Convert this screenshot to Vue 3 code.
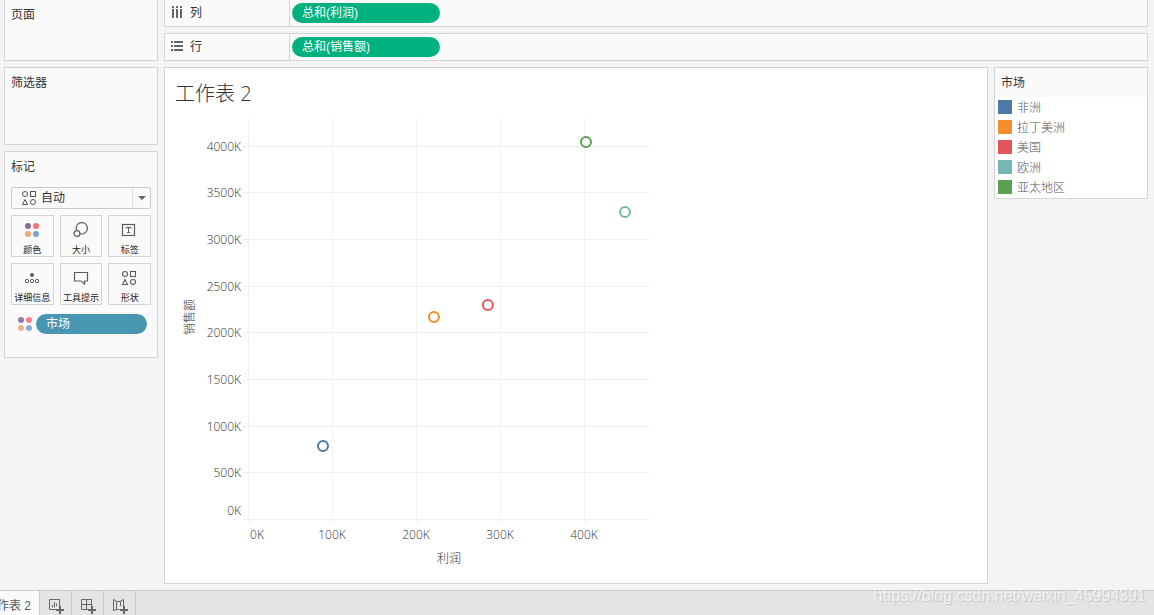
<script setup>
import { ref } from 'vue'

const markType = ref('auto')

const shelves = [
  { key: 'columns', label: '列', pill: '总和(利润)' },
  { key: 'rows', label: '行', pill: '总和(销售额)' },
]

const markButtons = [
  { key: 'color', label: '颜色' },
  { key: 'size', label: '大小' },
  { key: 'label', label: '标签' },
  { key: 'detail', label: '详细信息' },
  { key: 'tooltip', label: '工具提示' },
  { key: 'shape', label: '形状' },
]

const markets = [
  { name: '非洲', color: '#4e79a7', profit: 88.7, sales: 787 },
  { name: '拉丁美洲', color: '#f28e2b', profit: 220.8, sales: 2169 },
  { name: '美国', color: '#e15759', profit: 285, sales: 2298 },
  { name: '欧洲', color: '#76b7b2', profit: 448.2, sales: 3294 },
  { name: '亚太地区', color: '#59a14f', profit: 401.8, sales: 4044 },
]

const px = (v) => 83.5 + v * 0.84
const py = (v) => 407.5 - v * 0.09335
const crisp = (v) => Math.floor(v) + 0.5

const xTicks = [0, 100, 200, 300, 400].map((v) => ({
  text: `${v}K`,
  at: crisp(px(v)),
  textAt: v === 0 ? 92 : Math.floor(px(v)),
}))
const yTicks = [0, 500, 1000, 1500, 2000, 2500, 3000, 3500, 4000].map((v) => ({
  text: `${v}K`,
  at: crisp(py(v)),
  textAt: v === 0 ? 403 : Math.floor(py(v)) + 5,
}))
</script>

<template>
  <div class="app">
    <div class="workspace">
      <aside class="side">
        <section class="card pages"><h2>页面</h2></section>
        <section class="card filters"><h2>筛选器</h2></section>
        <section class="card marks">
          <h2>标记</h2>
          <div class="select-wrap">
            <svg class="select-icon" width="16" height="16" viewBox="0 0 16 16" fill="none" stroke="#555">
              <circle cx="4" cy="4" r="2.5" /><rect x="9.5" y="1.5" width="5" height="5" />
              <path d="M4 9.500 6.500 14.500H1.500z" /><circle cx="12" cy="12" r="2.5" />
            </svg>
            <select v-model="markType" aria-label="标记类型">
              <option value="auto">自动</option>
            </select>
            <span class="arrow"></span>
          </div>
          <div class="mark-grid">
            <button v-for="b in markButtons" :key="b.key" type="button" class="mark-btn">
              <svg width="18" height="18" viewBox="0 0 18 18" fill="none" stroke="#5c5c5c">
                <g v-if="b.key === 'color'" stroke="none">
                  <circle cx="5" cy="5" r="3" fill="#866b98" /><circle cx="13" cy="5" r="3" fill="#fb6f80" />
                  <circle cx="5" cy="13" r="3" fill="#f3a57a" /><circle cx="13" cy="13" r="3" fill="#7ba3cd" />
                </g>
                <g v-else-if="b.key === 'size'" stroke-width="1.2">
                  <path d="M4.500 9.400A5.700 5.700 0 1 1 8 12.700" /><circle cx="5" cy="12.500" r="2.900" />
                </g>
                <g v-else-if="b.key === 'label'">
                  <rect x="1.500" y="3.500" width="12" height="11" stroke-width="1.2" />
                  <path d="M5 7.500V6.500h5v1M7.500 6.500v5M6 11.500h3" />
                </g>
                <g v-else-if="b.key === 'detail'">
                  <circle cx="9" cy="6" r="2" fill="#5c5c5c" stroke="none" />
                  <circle cx="4" cy="12" r="1.7" /><circle cx="9" cy="12" r="1.7" /><circle cx="14" cy="12" r="1.7" />
                </g>
                <path v-else-if="b.key === 'tooltip'" stroke-width="1.2" d="M2.500 3.500h13v8.500h-3v3l-3.500-3h-6.500z" />
                <g v-else stroke-width="1.1">
                  <circle cx="4" cy="5" r="2.500" /><rect x="9.500" y="2.500" width="5" height="5" />
                  <path d="M4 10.500 6.500 15.500H1.500z" /><circle cx="12" cy="13" r="2.500" />
                </g>
              </svg>
              <span>{{ b.label }}</span>
            </button>
          </div>
          <div class="mark-field">
            <svg width="16" height="16" viewBox="0 0 16 16">
              <circle cx="4" cy="4" r="3" fill="#957aa6" /><circle cx="12" cy="4" r="3" fill="#fb7d8b" />
              <circle cx="4" cy="12" r="3" fill="#f4ae87" /><circle cx="12" cy="12" r="3" fill="#8aaed2" />
            </svg>
            <button type="button" class="pill dimension">市场</button>
          </div>
        </section>
      </aside>

      <main class="main">
        <div class="shelves">
          <div v-for="s in shelves" :key="s.key" class="shelf" :class="s.key">
            <div class="shelf-name">
              <svg width="14" height="14" viewBox="0 0 14 14" fill="#666">
                <path v-if="s.key === 'columns'" d="M1 0h2v2H1zM5 0h2v2H5zM9 0h2v2H9zM1 3h2v9H1zM5 3h2v9H5zM9 3h2v9H9z" />
                <path v-else d="M0 1h2v2H0zM0 5h2v2H0zM0 9h2v2H0zM3 1h9v2H3zM3 5h9v2H3zM3 9h9v2H3z" />
              </svg>
              <span>{{ s.label }}</span>
            </div>
            <div class="shelf-drop"><button type="button" class="pill measure">{{ s.pill }}</button></div>
          </div>
        </div>

        <div class="content">
          <section class="sheet">
            <h1>工作表 2</h1>
            <svg class="chart" width="500" height="460" viewBox="0 0 500 460">
              <g stroke="#f0f0f0">
                <line v-for="t in xTicks" :key="t.text" :x1="t.at" :x2="t.at" y1="6" y2="411" />
                <line v-for="t in yTicks" :key="t.text" x1="78" x2="485" :y1="t.at" :y2="t.at" />
              </g>
              <g class="tick">
                <text v-for="t in xTicks" :key="t.text" :x="t.textAt" y="427" text-anchor="middle">{{ t.text }}</text>
                <text v-for="t in yTicks" :key="t.text" x="76" :y="t.textAt" text-anchor="end">{{ t.text }}</text>
              </g>
              <text class="axis" x="284" y="451" text-anchor="middle">利润</text>
              <text class="axis" transform="translate(29 205) rotate(-90)" text-anchor="middle">销售额</text>
              <circle
                v-for="m in markets" :key="m.name"
                :cx="px(m.profit)" :cy="py(m.sales)" r="5"
                fill="none" stroke-width="2" :stroke="m.color"
              />
            </svg>
          </section>

          <aside class="legend">
            <h2>市场</h2>
            <ul>
              <li v-for="m in markets" :key="m.name">
                <span class="swatch" :style="{ background: m.color }"></span>{{ m.name }}
              </li>
            </ul>
          </aside>
        </div>
      </main>
    </div>

    <nav class="tabs">
      <button type="button" class="tab active">工作表 2</button>
      <button type="button" class="tab" aria-label="新建工作表">
        <svg width="18" height="18" viewBox="0 0 18 18" fill="none" stroke="#666">
          <path d="M9 12.500H2.500v-10h10V9M5.500 10.500V8M7.500 10.500V5M9.500 9V6.500" />
          <path d="M13 9v8M9 13h8" stroke-width="2" />
        </svg>
      </button>
      <button type="button" class="tab" aria-label="新建仪表板">
        <svg width="18" height="18" viewBox="0 0 18 18" fill="none" stroke="#666">
          <path d="M9 12.500H2.500v-10h10V9M2.500 7.500h10M7.500 2.500v10" />
          <path d="M13 9v8M9 13h8" stroke-width="2" />
        </svg>
      </button>
      <button type="button" class="tab" aria-label="新建故事">
        <svg width="18" height="18" viewBox="0 0 18 18" fill="none" stroke="#666">
          <path d="M8.500 12.500H6.500L2.500 13.500v-11L6 4.500h3l3.500-2V9M5.500 4v8.500M9.500 4v5" />
          <path d="M13 9v8M9 13h8" stroke-width="2" />
        </svg>
      </button>
    </nav>
    <div class="watermark">https://blog.csdn.net/weixin_45994391</div>
  </div>
</template>

<style>
body {
  margin: 0;
  background: #f4f4f4;
}
</style>

<style scoped>
.app {
  position: relative;
  display: flex;
  flex-direction: column;
  min-height: 100vh;
  font: 12px/16px "Liberation Sans", "Noto Sans CJK SC", sans-serif;
  color: #333;
}
h1, h2, ul { margin: 0; padding: 0; font-weight: 400; }
button, select { font: inherit; color: inherit; margin: 0; }
svg { display: block; flex: none; }

.workspace {
  flex: 1;
  display: flex;
  gap: 6px;
  padding: 0 6px 6px 4px;
}
.side {
  flex: none;
  width: 154px;
  display: flex;
  flex-direction: column;
  gap: 6px;
}
.card {
  box-sizing: border-box;
  border: 1px solid #d4d4d4;
  background: #fafafa;
  padding: 0 6px;
}
h2 { font-size: 12px; line-height: 30px; }
.pages { min-height: 61px; border-top: 0; }
.filters { min-height: 78px; }
.marks { padding-bottom: 23px; }

.select-wrap { position: relative; margin-top: 5px; }
.select-wrap select {
  display: block;
  appearance: none;
  box-sizing: border-box;
  width: 100%;
  height: 22px;
  padding: 0 20px 0 29px;
  border: 1px solid #c8c8c8;
  border-radius: 2px;
  background: #fafafa;
}
.select-icon { position: absolute; left: 10px; top: 3px; pointer-events: none; }
.arrow {
  position: absolute;
  right: 1px;
  top: 1px;
  bottom: 1px;
  width: 17px;
  border-left: 1px solid #ddd;
  display: grid;
  place-items: center;
  pointer-events: none;
}
.arrow::before {
  content: "";
  border: 4px solid transparent;
  border-top-color: #666;
  border-bottom: 0;
}
.mark-grid {
  display: grid;
  grid-template-columns: repeat(3, 1fr);
  gap: 6px;
  margin-top: 6px;
}
.mark-btn {
  height: 42px;
  padding: 5px 0 0;
  border: 1px solid #d4d4d4;
  background: #fafafa;
  display: flex;
  flex-direction: column;
  align-items: center;
  gap: 5px;
  min-width: 0;
  font-size: 9px;
  line-height: 12px;
  white-space: nowrap;
  color: #222;
}
.mark-field {
  display: flex;
  align-items: center;
  gap: 3px;
  margin-top: 9px;
  padding: 0 4px 0 6px;
}
.pill {
  height: 20px;
  border: 0;
  border-radius: 10px;
  padding: 0 10px;
  color: #fff;
  text-align: left;
  line-height: 20px;
}
.dimension { flex: 1; background: #4996b2; }
.measure { width: 148px; background: #00b180; }

.main {
  flex: 1;
  min-width: 0;
  display: flex;
  flex-direction: column;
  gap: 6px;
}
.shelves { display: flex; flex-direction: column; gap: 6px; }
.shelf {
  display: flex;
  border: 1px solid #d4d4d4;
  background: #fafafa;
}
.shelf.columns { border-top: 0; }
.shelf-name {
  width: 118px;
  height: 26px;
  padding-left: 6px;
  border-right: 1px solid #d4d4d4;
  display: flex;
  align-items: center;
  gap: 5px;
}
.shelf-drop { padding: 3px 2px; display: flex; }

.content { flex: 1; display: flex; gap: 6px; align-items: flex-start; }
.sheet {
  flex: 1;
  align-self: stretch;
  min-width: 0;
  border: 1px solid #d4d4d4;
  background: #fff;
}
h1 {
  padding: 11px 10px 3px;
  font: 300 20px/30px "Open Sans", "Noto Sans CJK SC", sans-serif;
}
.tick { font: 300 12px "Open Sans", sans-serif; fill: #333; }
.axis { font: 300 12px "Noto Sans CJK SC", sans-serif; fill: #333; }

.legend {
  box-sizing: border-box;
  flex: none;
  width: 154px;
  border: 1px solid #d4d4d4;
  background: #fff;
}
.legend h2 { padding: 1px 6px 0; line-height: 28px; background: #fafafa; }
.legend ul { list-style: none; padding: 0 3px 1px; }
.legend li {
  display: flex;
  align-items: center;
  gap: 5px;
  height: 20px;
  font-family: "Noto Sans CJK SC", sans-serif;
  font-weight: 300;
  color: #555;
}
.swatch { width: 14px; height: 14px; }

.tabs {
  display: flex;
  height: 24px;
  border-top: 1px solid #c9c9c9;
  background: #e4e4e4;
}
.tab {
  box-sizing: border-box;
  width: 32px;
  padding: 6px 0 0;
  border: 0;
  border-right: 1px solid #c9c9c9;
  background: transparent;
  display: flex;
  justify-content: center;
}
.tab.active {
  width: 40px;
  justify-content: flex-end;
  padding: 7px 8px 0 0;
  white-space: nowrap;
  background: #fafafa;
  color: #555;
}
.watermark {
  position: absolute;
  right: 8px;
  bottom: 8px;
  font-size: 16px;
  line-height: 22px;
  color: rgba(255, 255, 255, 0.7);
  text-shadow: 1px 1px 1px rgba(0, 0, 0, 0.15);
  pointer-events: none;
}
</style>
